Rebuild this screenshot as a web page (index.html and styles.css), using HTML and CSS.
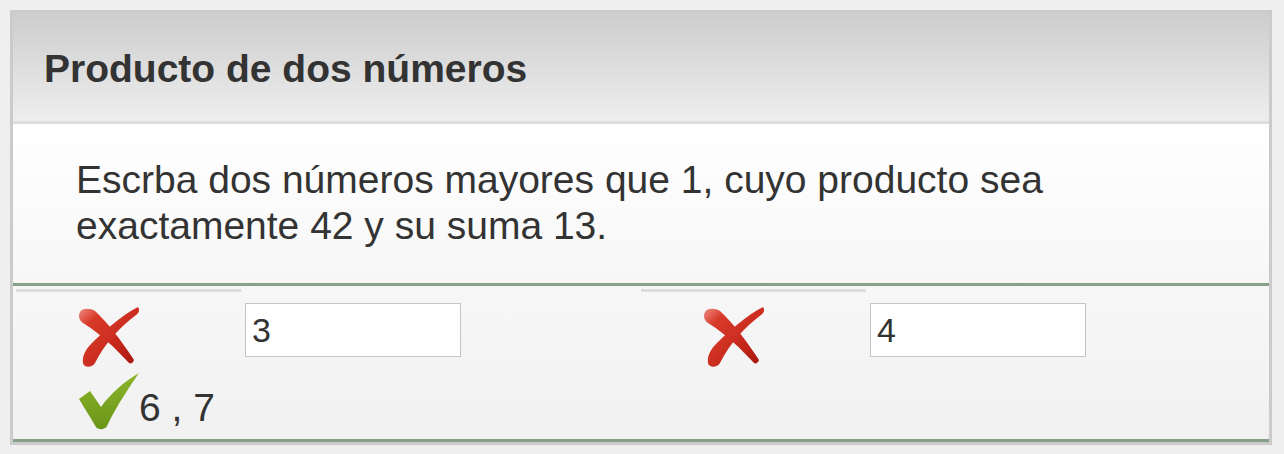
FILE: index.html
```html
<!DOCTYPE html>
<html lang="es">
<head>
<meta charset="utf-8">
<title>Producto de dos números</title>
<link rel="stylesheet" href="styles.css">
</head>
<body>
<svg class="defs" width="0" height="0" aria-hidden="true">
  <defs>
    <linearGradient id="redg" x1="0" y1="0" x2="1" y2="1">
      <stop offset="0" stop-color="#ee8a80"/>
      <stop offset="0.22" stop-color="#d83a2a"/>
      <stop offset="0.7" stop-color="#c4261a"/>
      <stop offset="1" stop-color="#a8180e"/>
    </linearGradient>
    <linearGradient id="greeng" x1="0" y1="0" x2="0" y2="1">
      <stop offset="0" stop-color="#8cb42c"/>
      <stop offset="1" stop-color="#6a9618"/>
    </linearGradient>
    <symbol id="icon-x" viewBox="0 0 60 60">
      <path d="M1 5 C3 1 11 1 16 4 C28 15 42 33 55 53 C54 56 52 57 50 56 C37 42 22 27 4 16 C0 13 -1 9 1 5 Z" fill="url(#redg)"/>
      <path d="M59 0 C61 3 60 6 57 8 C41 20 26 36 16 56 C13 61 5 61 4 56 C3 50 6 43 12 37 C26 23 42 9 59 0 Z" fill="url(#redg)"/>
    </symbol>
    <symbol id="icon-check" viewBox="0 0 60 57">
      <path d="M0 26 L11 18 L22 34 C32 20 46 8 60 0 C52 12 39 30 28 53 C26 57 19 57 17 54 Z" fill="url(#greeng)"/>
    </symbol>
  </defs>
</svg>
<div class="panel">
  <div class="header">
    <h1 class="title">Producto de dos números</h1>
  </div>
  <div class="question">
    <p class="prompt">Escrba dos números mayores que 1, cuyo producto sea exactamente 42 y su suma 13.</p>
  </div>
  <div class="answers">
    <div class="col">
      <div class="sep"></div>
      <div class="row">
        <div class="mark"><svg class="icon-x" width="60" height="60"><use href="#icon-x"/></svg></div>
        <div class="field"><input class="num" type="text" value="3"></div>
      </div>
      <div class="solution"><svg class="icon-check" width="60" height="57"><use href="#icon-check"/></svg><span class="sol-text">6 , 7</span></div>
    </div>
    <div class="col">
      <div class="sep"></div>
      <div class="row">
        <div class="mark"><svg class="icon-x" width="60" height="60"><use href="#icon-x"/></svg></div>
        <div class="field"><input class="num" type="text" value="4"></div>
      </div>
    </div>
  </div>
</div>
</body>
</html>
```

FILE: styles.css
```css
html, body {
  margin: 0;
  padding: 0;
}
body {
  background: #efefef;
  font-family: "Liberation Sans", Arial, Helvetica, sans-serif;
  color: #333;
}
.defs {
  position: absolute;
  width: 0;
  height: 0;
  overflow: hidden;
}
.panel {
  margin: 10px 0 0 10px;
  width: 1262px;
  box-sizing: border-box;
  border-left: 3px solid #cbcbcb;
  border-right: 3px solid #cbcbcb;
  border-bottom: 3px solid #cbcbcb;
}
.header {
  height: 114px;
  box-sizing: border-box;
  padding: 36px 0 0 31px;
  background: linear-gradient(to bottom, #cccccc, #eeeeee);
  border-bottom: 3px solid #dddddd;
}
.title {
  margin: 0;
  font-size: 39px;
  line-height: 45px;
  font-weight: bold;
  color: #333;
}
.question {
  height: 162px;
  box-sizing: border-box;
  padding: 33px 40px 0 63px;
  background: linear-gradient(to bottom, #ffffff, #f7f7f7);
  border-bottom: 3px solid #88a088;
}
.prompt {
  margin: 0;
  font-size: 39px;
  line-height: 46px;
  color: #333;
}
.answers {
  height: 156px;
  box-sizing: border-box;
  padding: 0 3px;
  display: grid;
  grid-template-columns: 625px 625px;
  background: linear-gradient(to bottom, #f7f7f7, #f1f1f1);
  border-bottom: 3px solid #88a088;
}
.sep {
  width: 225px;
  height: 3px;
  margin-top: 3px;
  background: #dddddd;
}
.row {
  display: flex;
  align-items: flex-start;
}
.mark {
  width: 225px;
  box-sizing: border-box;
  padding: 15px 0 0 63px;
}
.mark svg, .solution svg {
  display: block;
}
.field {
  margin-left: 4px;
  padding-top: 11px;
}
.num {
  display: block;
  width: 216px;
  height: 54px;
  box-sizing: border-box;
  margin: 0;
  border: 1px solid #c4c4c4;
  background: #fff;
  padding: 0 6px;
  font-family: "Liberation Sans", Arial, Helvetica, sans-serif;
  font-size: 34px;
  color: #333;
  outline: none;
}
.solution {
  display: flex;
  align-items: flex-end;
  margin-top: 6px;
  padding-left: 63px;
  font-size: 39px;
  line-height: 45px;
  color: #333;
}
```
